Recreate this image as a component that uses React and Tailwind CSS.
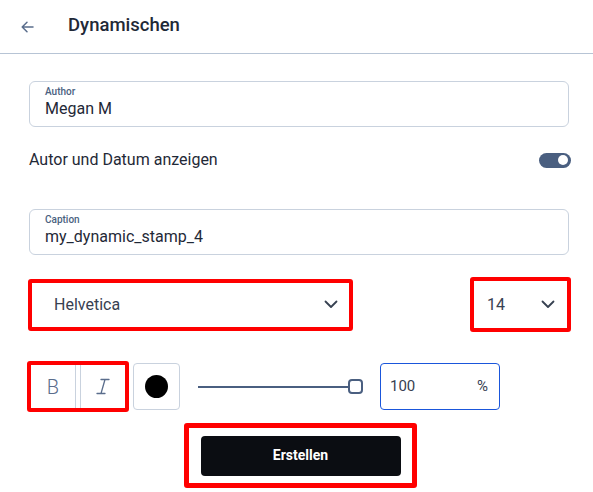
import React from "react";

const font = { fontFamily: "Roboto, 'Noto Sans', sans-serif" };

function Chevron({ className }) {
  return (
    <svg className={className} width="14" height="9" viewBox="0 0 14 9" fill="none">
      <path d="M1.5 1.5 7 7l5.5-5.5" stroke="#374151" strokeWidth="1.8" strokeLinecap="round" strokeLinejoin="round" />
    </svg>
  );
}

function Field({ label, value }) {
  return (
    <div className="h-[46px] rounded-[6px] border border-[#c9d2de] px-[15px] pt-[3px]">
      <div className="text-[10px] leading-[14px] font-medium text-[#4a5f80]">{label}</div>
      <div className="text-[16px] leading-[20px] text-[#1f2937]">{value}</div>
    </div>
  );
}

export default function App() {
  return (
    <div className="w-[593px] h-[492px] bg-white text-[#1f2937] overflow-hidden" style={font}>
      {/* header */}
      <div className="h-[54px] border-b border-[#b7c4d5] flex items-center">
        <svg className="ml-[21px]" width="13" height="12" viewBox="0 0 13 12" fill="none">
          <path d="M12 6H1.5M6 1.2 1.2 6 6 10.8" stroke="#5a6d8c" strokeWidth="1.5" strokeLinecap="round" strokeLinejoin="round" />
        </svg>
        <div className="ml-[34px] text-[18.5px] font-medium text-[#1f2937] -mt-[2px]">Dynamischen</div>
      </div>

      <div className="px-[29px] pr-[24px]">
        <div className="mt-[27px]">
          <Field label="Author" value="Megan M" />
        </div>

        <div className="mt-[18px] h-[30px] flex items-center justify-between">
          <span className="text-[16px] text-[#1f2937]">Autor und Datum anzeigen</span>
          <div className="w-[32px] h-[15px] rounded-full bg-[#4a5f80] flex items-center justify-end pr-[3px] mr-[-2px]">
            <div className="w-[10px] h-[10px] rounded-full bg-white" />
          </div>
        </div>

        <div className="mt-[34px]">
          <Field label="Caption" value="my_dynamic_stamp_4" />
        </div>

        {/* font family and size */}
        <div className="mt-[22px] flex justify-between items-center">
          <div className="ml-[-1px] w-[325px] h-[52px] border-4 border-[#ff0000] rounded-[3px] flex items-center justify-between pl-[22px] pr-[11px]">
            <span className="text-[16px] text-[#374151]">Helvetica</span>
            <Chevron />
          </div>
          <div className="mr-[-2px] w-[101px] h-[55px] border-4 border-[#ff0000] rounded-[3px] flex items-center justify-between pl-[13px] pr-[12px]">
            <span className="text-[16px] text-[#374151]">14</span>
            <Chevron />
          </div>
        </div>

        {/* style controls */}
        <div className="mt-[29px] flex items-center">
          <div className="ml-[-2px] w-[102px] h-[51px] border-4 border-[#ff0000] rounded-[3px] flex">
            <div className="flex-1 flex items-center justify-center border-r border-[#c9d2de] text-[20px] font-light text-[#5a6d8c]">
              B
            </div>
            <div className="flex-1 flex items-center justify-center border-l border-[#c9d2de] ml-[4px]">
              <svg width="14" height="17" viewBox="0 0 14 17" fill="none">
                <path d="M5 1.5h8M1 15.5h8M9 1.5 5 15.5" stroke="#5a6d8c" strokeWidth="1.3" strokeLinecap="round" />
              </svg>
            </div>
          </div>
          <div className="ml-[4px] w-[47px] h-[47px] rounded-[4px] border border-[#c9d2de] flex items-center justify-center">
            <div className="w-[23px] h-[23px] rounded-full bg-black" />
          </div>
          <div className="ml-[18px] w-[165px] h-[16px] flex items-center">
            <div className="flex-1 h-[2px] bg-[#4a5f80]" />
            <div className="w-[15px] h-[15px] rounded-[4px] border-2 border-[#4a5f80] bg-white" />
          </div>
          <div className="ml-[17px] w-[120px] h-[47px] rounded-[4px] border border-[#1a56db] flex items-center justify-between pl-[9px] pr-[11px]">
            <span className="text-[15px] text-[#374151]">100</span>
            <span className="text-[15px] text-[#374151]">%</span>
          </div>
        </div>

        {/* submit */}
        <div className="mt-[11px] ml-[155px] w-[233px] h-[65px] border-[5px] border-[#ff0000] rounded-[3px] flex items-center justify-center">
          <button className="w-[200px] h-[40px] rounded-[4px] bg-[#0b0d12] text-white text-[14px] font-bold">
            Erstellen
          </button>
        </div>
      </div>
    </div>
  );
}
